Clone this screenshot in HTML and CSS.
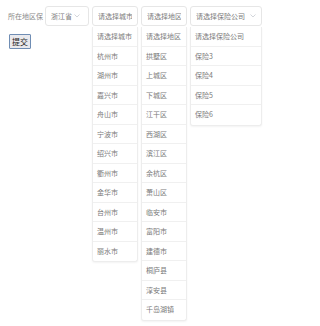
FILE: index.html
```html
<!DOCTYPE html>
<html>
<head>
<meta charset="utf-8">
<link rel="stylesheet" href="styles.css">
</head>
<body>
<form class="form">
  <div class="lead">
    <div class="line">
      <label class="label">所在地区保</label>
      <div class="select s1">
        <div class="box"><span class="val">浙江省</span>
          <svg class="arrow" width="6" height="4" viewBox="0 0 6 4"><polyline points="0.5,0.5 3,3 5.5,0.5" fill="none" stroke="#c0c4cc" stroke-width="0.7"/></svg>
        </div>
      </div>
    </div>
    <button type="button" class="submit">提交</button>
  </div>
  <div class="select s2">
    <div class="box"><span class="val">请选择城市</span></div>
    <ul class="list">
      <li>请选择城市</li><li>杭州市</li><li>湖州市</li><li>嘉兴市</li><li>舟山市</li><li>宁波市</li><li>绍兴市</li><li>衢州市</li><li>金华市</li><li>台州市</li><li>温州市</li><li>丽水市</li>
    </ul>
  </div>
  <div class="select s3">
    <div class="box"><span class="val">请选择地区</span></div>
    <ul class="list">
      <li>请选择地区</li><li>拱墅区</li><li>上城区</li><li>下城区</li><li>江干区</li><li>西湖区</li><li>滨江区</li><li>余杭区</li><li>萧山区</li><li>临安市</li><li>富阳市</li><li>建德市</li><li>桐庐县</li><li>淳安县</li><li>千岛湖镇</li>
    </ul>
  </div>
  <div class="select s4">
    <div class="box"><span class="val">请选择保险公司</span>
      <svg class="arrow" width="6" height="4" viewBox="0 0 6 4"><polyline points="0.5,0.5 3,3 5.5,0.5" fill="none" stroke="#c0c4cc" stroke-width="0.7"/></svg>
    </div>
    <ul class="list">
      <li>请选择保险公司</li><li>保险3</li><li>保险4</li><li>保险5</li><li>保险6</li>
    </ul>
  </div>
</form>
</body>
</html>
```
FILE: styles.css
```css
html, body {
  margin: 0;
  padding: 0;
  background: #fff;
}
body {
  font-family: "Noto Sans CJK SC", "Noto Sans", sans-serif;
  font-size: 7px;
  color: #7a7a7a;
  min-height: 326px;
}
.form {
  display: flex;
  align-items: flex-start;
  gap: 3px;
  padding: 6px 0 0 8px;
}
.lead {
  display: flex;
  flex-direction: column;
}
.line {
  display: flex;
  align-items: center;
  height: 20px;
}
.label {
  width: 37px;
  white-space: nowrap;
  color: #888;
  line-height: 20px;
}
.select {
  display: flex;
  flex-direction: column;
}
.s1 { width: 44px; }
.s2 { width: 46px; }
.s3 { width: 46px; }
.s4 { width: 72px; }
.box {
  box-sizing: border-box;
  height: 20px;
  border: 1px solid #e6e6e6;
  border-radius: 3px;
  display: flex;
  align-items: center;
  padding: 0 5px;
  background: #fff;
}
.val {
  flex: 1;
  white-space: nowrap;
  overflow: hidden;
}
.arrow {
  flex: none;
  margin-left: 2px;
}
.s1 .arrow { margin-right: 3px; }
.list {
  box-sizing: border-box;
  margin: 1px 0 0;
  padding: 0;
  list-style: none;
  background: #fff;
  border: 1px solid #ededed;
  border-top: none;
  border-radius: 0 0 3px 3px;
  box-shadow: 0 1px 2px rgba(0,0,0,0.05);
}
.list li {
  box-sizing: border-box;
  height: 19.5px;
  line-height: 19px;
  padding: 0 4px;
  border-bottom: 1px solid #f0f0f0;
  white-space: nowrap;
  overflow: hidden;
}
.list li:last-child {
  border-bottom: none;
}
.submit {
  align-self: flex-start;
  margin: 8px 0 0 1px;
  height: 15px;
  width: 22px;
  padding: 0;
  font-family: "Noto Sans CJK SC", sans-serif;
  font-size: 8px;
  line-height: 13px;
  color: #222;
  background: #e9e9ed;
  border: 1px solid #6f8db4;
  border-radius: 1px;
}
```
